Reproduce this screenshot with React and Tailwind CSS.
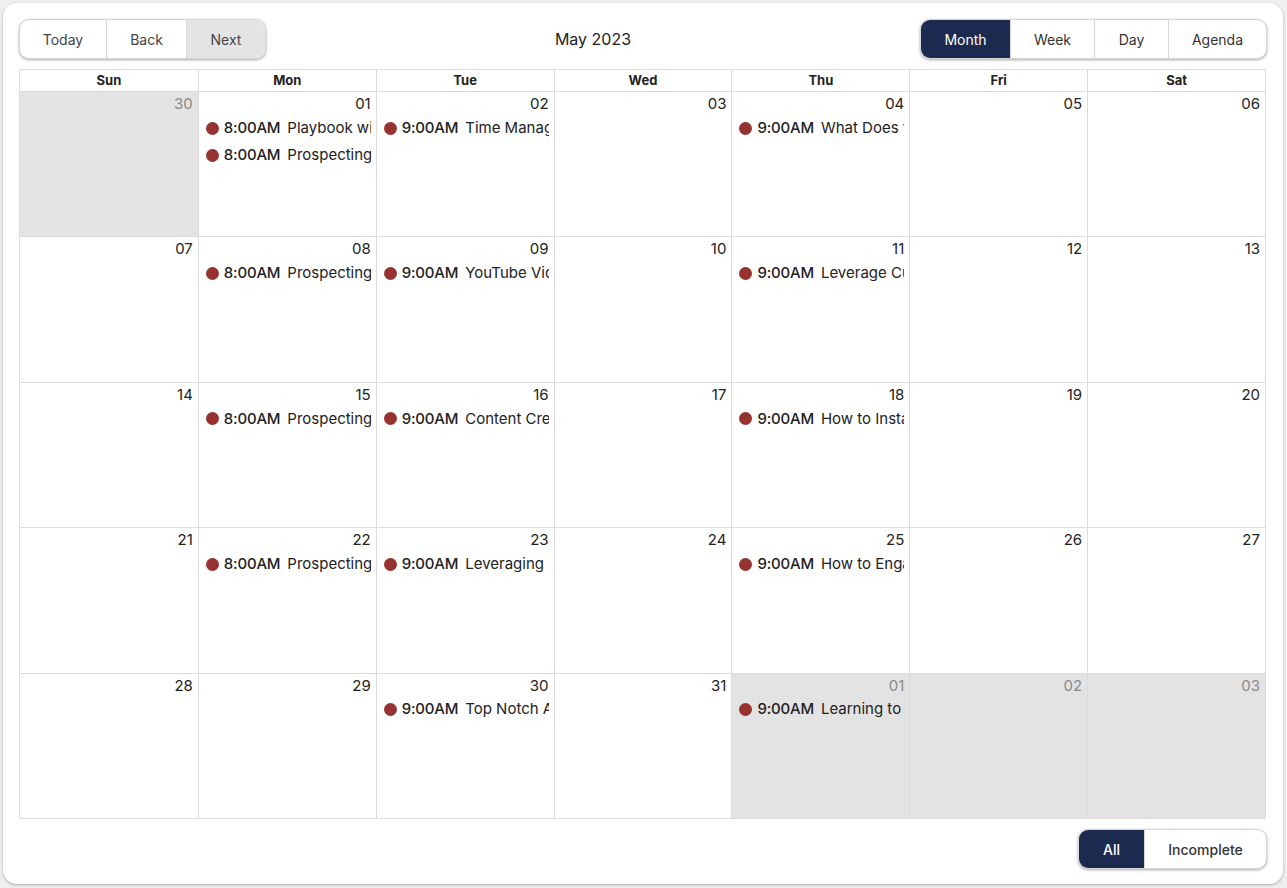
import { useState } from 'react';

const weekdays = ['Sun', 'Mon', 'Tue', 'Wed', 'Thu', 'Fri', 'Sat'];

// semaines de mai 2023, avec les jours hors mois
const weeks = [
    [{ d: '30', off: true }, { d: '01', ev: [['8:00AM', 'Playbook with Prospecting'], ['8:00AM', 'Prospecting']] }, { d: '02', ev: [['9:00AM', 'Time Management']] }, { d: '03' }, { d: '04', ev: [['9:00AM', 'What Does your Brand']] }, { d: '05' }, { d: '06' }],
    [{ d: '07' }, { d: '08', ev: [['8:00AM', 'Prospecting']] }, { d: '09', ev: [['9:00AM', 'YouTube Video']] }, { d: '10' }, { d: '11', ev: [['9:00AM', 'Leverage Customer']] }, { d: '12' }, { d: '13' }],
    [{ d: '14' }, { d: '15', ev: [['8:00AM', 'Prospecting']] }, { d: '16', ev: [['9:00AM', 'Content Creation']] }, { d: '17' }, { d: '18', ev: [['9:00AM', 'How to Instantly']] }, { d: '19' }, { d: '20' }],
    [{ d: '21' }, { d: '22', ev: [['8:00AM', 'Prospecting']] }, { d: '23', ev: [['9:00AM', 'Leveraging LinkedIn']] }, { d: '24' }, { d: '25', ev: [['9:00AM', 'How to Engage']] }, { d: '26' }, { d: '27' }],
    [{ d: '28' }, { d: '29' }, { d: '30', ev: [['9:00AM', 'Top Notch Agents']] }, { d: '31' }, { d: '01', off: true, ev: [['9:00AM', 'Learning to Sell']] }, { d: '02', off: true }, { d: '03', off: true }],
];

function Group({ items, active, onPick, widths }) {
    return (
        <div className="flex h-[40px] rounded-[10px] bg-white shadow-[0_1px_3px_rgba(0,0,0,0.35)] overflow-hidden border border-[#d6d6d6]">
            {items.map((it, i) => (
                <button
                    key={it}
                    onClick={() => onPick(it)}
                    className={`${widths[i]} h-full text-[14px] ${i > 0 ? 'border-l border-[#d6d6d6]' : ''} ${active === it ? 'bg-[#1b2a4e] text-white' : 'text-[#333]'}`}
                >
                    {it}
                </button>
            ))}
        </div>
    );
}

export default function App() {
    const [view, setView] = useState('Month');
    const [filter, setFilter] = useState('All');

    return (
        <div className="w-[1287px] h-[888px] bg-[#efefef] p-[3px] font-['Inter','Liberation_Sans',sans-serif] text-[#222]">
            <div className="w-[1280px] h-[881px] bg-white rounded-[14px] shadow-[0_1px_3px_rgba(0,0,0,0.3)] pt-[16px] px-[16px] flex flex-col">

                {/* Barre d'outils */}
                <div className="flex items-center h-[40px]">
                    <div className="flex h-[40px] rounded-[10px] bg-white shadow-[0_1px_3px_rgba(0,0,0,0.35)] overflow-hidden border border-[#d6d6d6]">
                        <button className="w-[86px] text-[14px] text-[#444]">Today</button>
                        <button className="w-[80px] text-[14px] text-[#444] border-l border-[#d6d6d6]">Back</button>
                        <button className="w-[79px] text-[14px] text-[#444] border-l border-[#d6d6d6] bg-[#e4e4e4]">Next</button>
                    </div>
                    <div className="flex-1 text-center text-[16px] text-[#222]">May 2023</div>
                    <Group items={['Month', 'Week', 'Day', 'Agenda']} active={view} onPick={setView} widths={['w-[89px]', 'w-[84px]', 'w-[74px]', 'w-[98px]']} />
                </div>

                {/* Calendrier */}
                <div className="mt-[10px] w-[1247px] border border-[#dcdcdc]">
                    <div className="grid grid-cols-7 h-[21px]">
                        {weekdays.map((w, i) => (
                            <div key={w} className={`text-center text-[13px] font-bold leading-[21px] ${i > 0 ? 'border-l border-[#dcdcdc]' : ''}`}>{w}</div>
                        ))}
                    </div>
                    <div className="grid grid-rows-5 h-[727px]">
                        {weeks.map((week, r) => (
                            <div key={r} className="grid grid-cols-7 border-t border-[#dcdcdc] min-h-0">
                                {week.map((c, i) => (
                                    <div key={i} className={`min-w-0 overflow-hidden ${i > 0 ? 'border-l border-[#dcdcdc]' : ''} ${c.off ? 'bg-[#e3e3e3]' : ''}`}>
                                        <div className={`text-right text-[15px] leading-[18px] pr-[5px] pt-[3px] ${c.off ? 'text-[#8a8a8a]' : 'text-[#222]'}`}>{c.d}</div>
                                        <div className="flex flex-col gap-[9px] mt-[6px] pl-[7px] pr-[5px]">
                                            {(c.ev ?? []).map(([t, title], k) => (
                                                <div key={k} className="flex items-center h-[18px] overflow-hidden whitespace-nowrap text-[15px]">
                                                    <span className="w-[13px] h-[13px] rounded-full bg-[#963330] shrink-0" />
                                                    <span className="ml-[5px] font-medium tracking-[-0.2px] shrink-0">{t}</span>
                                                    <span className="ml-[7px] overflow-hidden">{title}</span>
                                                </div>
                                            ))}
                                        </div>
                                    </div>
                                ))}
                            </div>
                        ))}
                    </div>
                </div>

                {/* Filtre */}
                <div className="flex justify-end mt-[10px]">
                    <Group items={['All', 'Incomplete']} active={filter} onPick={setFilter} widths={['w-[65px] font-medium', 'w-[122px] font-medium']} />
                </div>
            </div>
        </div>
    );
}
